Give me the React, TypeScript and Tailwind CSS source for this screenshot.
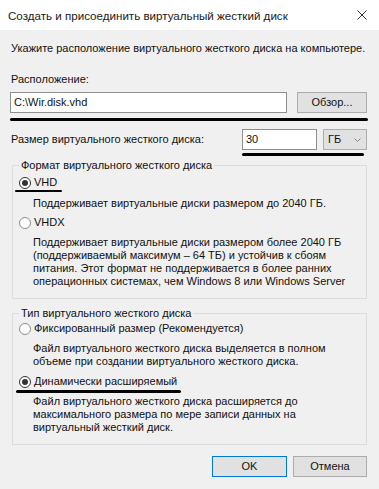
import React from 'react'

const font = { fontFamily: '"Liberation Sans", Arial, sans-serif' }

function Radio({ checked }: { checked: boolean }) {
  return (
    <span
      className={`flex h-[12px] w-[12px] shrink-0 items-center justify-center rounded-full border bg-white ${
        checked ? 'border-[#333333]' : 'border-[#8c8c8c]'
      }`}
    >
      {checked && <span className="h-[6px] w-[6px] rounded-full bg-[#333333]" />}
    </span>
  )
}

function Option({ checked, label }: { checked: boolean; label: string }) {
  return (
    <div className="ml-[6px] flex h-[13px] items-center gap-[3px]">
      <Radio checked={checked} />
      <span>{label}</span>
    </div>
  )
}

export default function App() {
  return (
    <div className="h-[489px] w-[379px] overflow-hidden whitespace-nowrap bg-[#f0f0f0] text-[11px] leading-[13px] text-[#111]" style={font}>
      {/* title bar */}
      <div className="flex h-[30px] items-center justify-between bg-white pl-[8px] pr-[12px]">
        <span className="text-[11.6px] text-[#1a1a1a]">Создать и присоединить виртуальный жесткий диск</span>
        <svg width="10" height="10" viewBox="0 0 10 10">
          <path d="M0.5 0.5 L9.5 9.5 M9.5 0.5 L0.5 9.5" stroke="#333" strokeWidth="1" fill="none" />
        </svg>
      </div>

      <div className="pl-[10px] pr-[12px]">
        <div className="mt-[12px] pl-[1px]">Укажите расположение виртуального жесткого диска на компьютере.</div>
        <div className="mt-[18px] pl-[1px]">Расположение:</div>

        <div className="mt-[6px] flex h-[21px] gap-[10px]">
          <div className="flex w-[277px] items-center border border-[#8f8f8f] bg-white pl-[3px]">C:\Wir.disk.vhd</div>
          <button className="flex flex-1 items-center justify-center border border-[#adadad] bg-[#e1e1e1]">Обзор...</button>
        </div>
        <div className="mt-[5px] h-[3px] w-[358px] rounded-full bg-black" />

        <div className="mt-[8px] flex h-[21px] items-center">
          <span className="w-[232px] pl-[1px]">Размер виртуального жесткого диска:</span>
          <div className="flex h-full w-[75px] items-center border border-[#8f8f8f] bg-white pl-[3px]">30</div>
          <div className="ml-[6px] flex h-full flex-1 items-center justify-between border border-[#adadad] bg-[#e1e1e1] pl-[4px] pr-[5px]">
            <span>ГБ</span>
            <svg width="7" height="4" viewBox="0 0 7 4">
              <path d="M0.5 0.5 L3.5 3.5 L6.5 0.5" stroke="#8a8a8a" strokeWidth="1" fill="none" />
            </svg>
          </div>
        </div>
        <div className="ml-[232px] mt-[3px] h-[3px] w-[122px] rounded-full bg-black" />

        <fieldset className="ml-[2px] mt-[3px] border border-[#dcdcdc] pb-[10px]">
          <legend className="ml-[6px] px-[2px]">Формат виртуального жесткого диска</legend>
          <div className="mt-[4px]">
            <Option checked label="VHD" />
          </div>
          <div className="ml-[2px] mt-[1px] h-[2px] w-[47px] rounded-full bg-black" />
          <div className="mt-[5px] pl-[20px]">Поддерживает виртуальные диски размером до 2040 ГБ.</div>
          <div className="mt-[6px]">
            <Option checked={false} label="VHDX" />
          </div>
          <div className="mt-[7px] pl-[20px]">
            Поддерживает виртуальные диски размером более 2040 ГБ
            <br />
            (поддерживаемый максимум – 64 ТБ) и устойчив к сбоям
            <br />
            питания. Этот формат не поддерживается в более ранних
            <br />
            операционных системах, чем Windows 8 или Windows Server
          </div>
        </fieldset>

        <fieldset className="ml-[2px] mt-[8px] border border-[#dcdcdc] pb-[10px]">
          <legend className="ml-[6px] px-[2px]">Тип виртуального жесткого диска</legend>
          <div className="mt-[2px]">
            <Option checked={false} label="Фиксированный размер (Рекомендуется)" />
          </div>
          <div className="mt-[7px] pl-[20px]">
            Файл виртуального жесткого диска выделяется в полном
            <br />
            объеме при создании виртуального жесткого диска.
          </div>
          <div className="mt-[7px]">
            <Option checked label="Динамически расширяемый" />
          </div>
          <div className="ml-[3px] mt-[2px] h-[3px] w-[165px] rounded-full bg-black" />
          <div className="mt-[2px] pl-[20px]">
            Файл виртуального жесткого диска расширяется до
            <br />
            максимального размера по мере записи данных на
            <br />
            виртуальный жесткий диск.
          </div>
        </fieldset>

        <div className="mt-[11px] flex justify-end gap-[6px]">
          <button className="h-[21px] w-[75px] border border-[#0078d7] bg-[#e1e1e1]">OK</button>
          <button className="h-[21px] w-[74px] border border-[#adadad] bg-[#e1e1e1]">Отмена</button>
        </div>
      </div>
    </div>
  )
}
